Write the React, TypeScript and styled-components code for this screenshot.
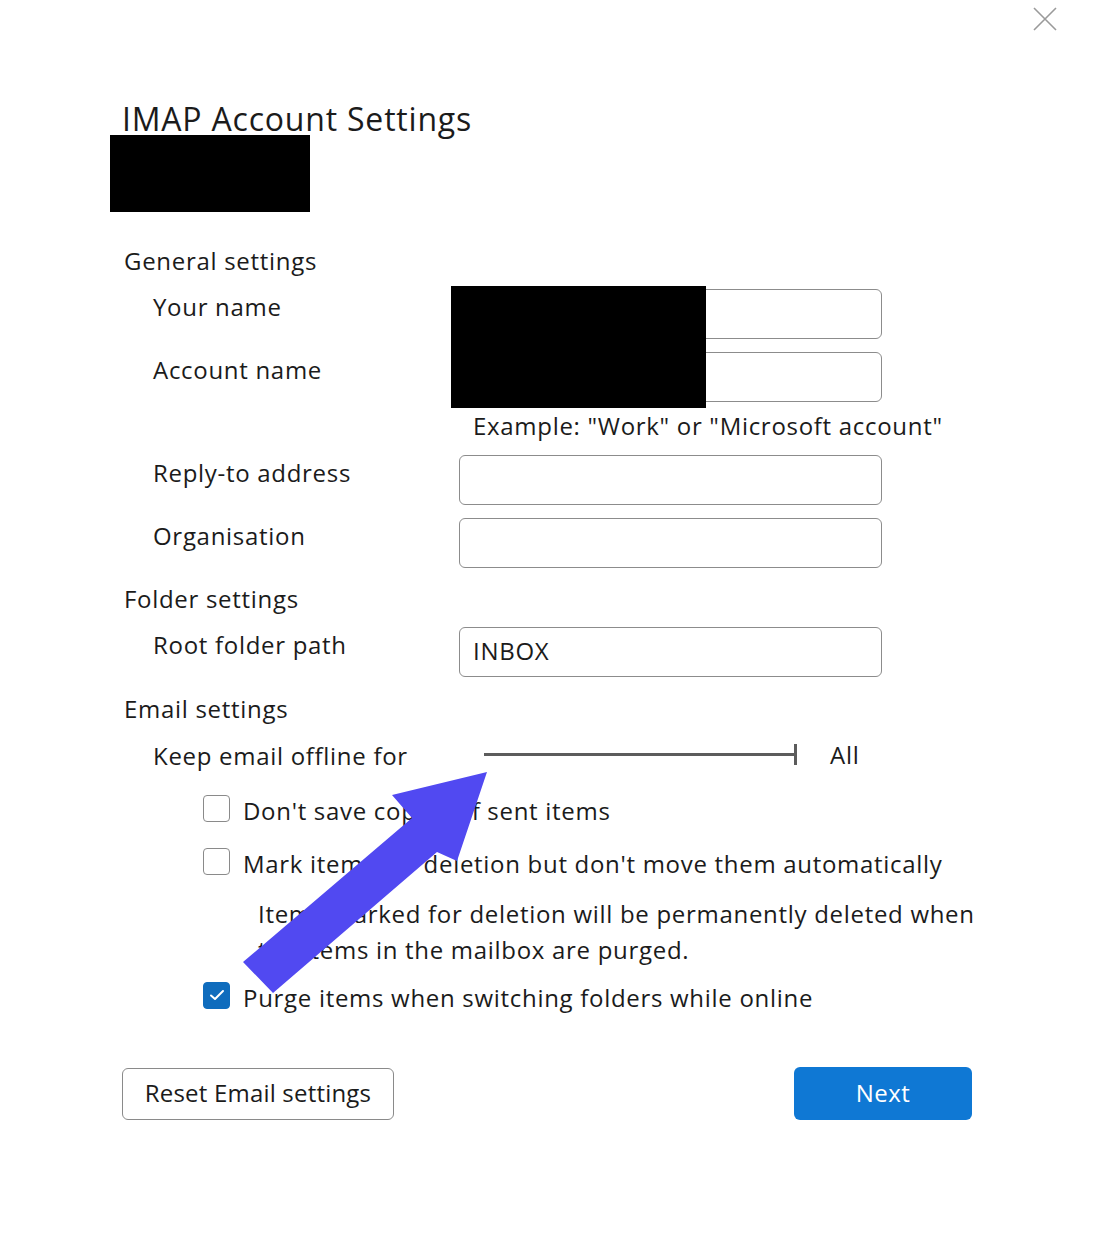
import styled, { createGlobalStyle } from "styled-components";

const GlobalStyle = createGlobalStyle`
  html, body {
    margin: 0;
    padding: 0;
    background: #ffffff;
  }
  body {
    font-family: "Open Sans", "Noto Sans", "Liberation Sans", sans-serif;
    color: #1b1b1b;
    letter-spacing: 0.7px;
  }
`;

const Page = styled.div`
  position: relative;
  width: 1101px;
  height: 1242px;
  background: #ffffff;
  overflow: hidden;
`;

const TopBar = styled.div`
  display: flex;
  justify-content: flex-end;
  height: 40px;
  padding-right: 44px;
`;

const CloseButton = styled.button`
  width: 24px;
  height: 24px;
  margin-top: 7px;
  padding: 0;
  border: none;
  background: transparent;
  display: flex;
  align-items: center;
  justify-content: center;
`;

const Content = styled.div`
  padding-left: 122px;
  width: 850px;
`;

const Title = styled.h1`
  margin: 59px 0 0;
  font-size: 32px;
  font-weight: 400;
  line-height: 40px;
  color: #1b1b1b;
  letter-spacing: 0.8px;
  white-space: nowrap;
`;

const Redacted = styled.div<{ $w: number; $h: number }>`
  width: ${(p) => p.$w}px;
  height: ${(p) => p.$h}px;
  background: #000000;
`;

const AccountRedaction = styled(Redacted)`
  margin: -4px 0 0 -12px;
`;

const SectionTitle = styled.div<{ $top: number }>`
  margin-top: ${(p) => p.$top}px;
  margin-left: 2px;
  font-size: 24px;
  line-height: 32px;
`;

const FieldGroup = styled.div`
  position: relative;
`;

const NameRedaction = styled(Redacted)`
  position: absolute;
  left: 329px;
  top: -3px;
`;

const FieldRow = styled.div<{ $top: number }>`
  display: grid;
  grid-template-columns: 306px 423px;
  align-items: center;
  height: 50px;
  margin-top: ${(p) => p.$top}px;
  padding-left: 31px;
`;

const Label = styled.div`
  font-size: 24px;
  line-height: 32px;
  padding-bottom: 14px;
  white-space: nowrap;
`;

const TextBox = styled.div`
  box-sizing: border-box;
  height: 50px;
  border: 1.5px solid #8c8c8c;
  border-radius: 6px;
  padding: 0 13px 3px;
  display: flex;
  align-items: center;
  font-size: 24px;
  color: #1b1b1b;
`;

const Hint = styled.div`
  margin: 8px 0 0 351px;
  font-size: 24px;
  line-height: 32px;
  white-space: nowrap;
`;

const SliderRow = styled.div`
  display: grid;
  grid-template-columns: 331px 313px auto;
  align-items: center;
  height: 32px;
  margin-top: 14px;
  padding-left: 31px;
`;

const SliderLabel = styled.div`
  font-size: 24px;
  line-height: 32px;
  white-space: nowrap;
`;

const Track = styled.div`
  position: relative;
  height: 3px;
  background: #5c5c5c;
  margin-top: -4px;

  &::after {
    content: "";
    position: absolute;
    right: 0;
    top: -9px;
    width: 3px;
    height: 21px;
    background: #5c5c5c;
  }
`;

const SliderValue = styled.div`
  padding-left: 33px;
  font-size: 24px;
  line-height: 32px;
  padding-bottom: 2px;
`;

const CheckRow = styled.label<{ $top: number }>`
  display: flex;
  align-items: center;
  gap: 13px;
  height: 32px;
  margin-top: ${(p) => p.$top}px;
  padding-left: 81px;
  font-size: 24px;
  white-space: nowrap;
`;

const CheckText = styled.span`
  padding-top: 5px;
`;

const Box = styled.span<{ $checked?: boolean }>`
  box-sizing: border-box;
  width: 27px;
  height: 27px;
  border-radius: 4px;
  border: 1.5px solid ${(p) => (p.$checked ? "#0f6cbd" : "#8a8a8a")};
  background: ${(p) => (p.$checked ? "#0f6cbd" : "#ffffff")};
  display: flex;
  align-items: center;
  justify-content: center;
  flex-shrink: 0;
`;

const Description = styled.div`
  margin: 19px 0 0 136px;
  font-size: 24px;
  line-height: 36px;
  white-space: nowrap;
`;

const Footer = styled.div`
  display: flex;
  justify-content: space-between;
  align-items: center;
  margin-top: 56px;
`;

const SecondaryButton = styled.button`
  box-sizing: border-box;
  width: 272px;
  height: 52px;
  border: 1.5px solid #8a8a8a;
  border-radius: 6px;
  background: #ffffff;
  font-family: inherit;
  font-size: 24px;
  color: #1b1b1b;
  letter-spacing: 0.2px;
  padding: 0 0 3px;
`;

const PrimaryButton = styled.button`
  box-sizing: border-box;
  width: 178px;
  height: 53px;
  border: none;
  border-radius: 6px;
  background: #0f78d4;
  font-family: inherit;
  font-size: 24px;
  color: #ffffff;
  letter-spacing: 0.4px;
  padding: 0 0 3px;
`;

const Annotation = styled.svg`
  position: absolute;
  left: 0;
  top: 0;
  pointer-events: none;
`;

const CheckMark = () => (
  <svg width="16" height="12" viewBox="0 0 16 12">
    <path d="M2 6.5 L6 10 L14 2" fill="none" stroke="#ffffff" strokeWidth="2" strokeLinecap="round" strokeLinejoin="round" />
  </svg>
);

const App = () => {
  return (
    <Page>
      <GlobalStyle />
      <TopBar>
        <CloseButton aria-label="Close">
          <svg width="24" height="24" viewBox="0 0 24 24">
            <path d="M1 1 L23 23 M23 1 L1 23" stroke="#9a9a9a" strokeWidth="1.6" />
          </svg>
        </CloseButton>
      </TopBar>
      <Content>
        <Title>IMAP Account Settings</Title>
        <AccountRedaction $w={200} $h={77} />

        <SectionTitle $top={33}>General settings</SectionTitle>
        <FieldGroup>
          <FieldRow $top={12}>
            <Label>Your name</Label>
            <TextBox />
          </FieldRow>
          <FieldRow $top={13}>
            <Label>Account name</Label>
            <TextBox />
          </FieldRow>
          <NameRedaction $w={255} $h={122} />
        </FieldGroup>
        <Hint>Example: "Work" or "Microsoft account"</Hint>
        <FieldRow $top={13}>
          <Label>Reply-to address</Label>
          <TextBox />
        </FieldRow>
        <FieldRow $top={13}>
          <Label>Organisation</Label>
          <TextBox />
        </FieldRow>

        <SectionTitle $top={15}>Folder settings</SectionTitle>
        <FieldRow $top={12}>
          <Label>Root folder path</Label>
          <TextBox>INBOX</TextBox>
        </FieldRow>

        <SectionTitle $top={16}>Email settings</SectionTitle>
        <SliderRow>
          <SliderLabel>Keep email offline for</SliderLabel>
          <Track />
          <SliderValue>All</SliderValue>
        </SliderRow>
        <CheckRow $top={21}>
          <Box />
          <CheckText>Don't save copies of sent items</CheckText>
        </CheckRow>
        <CheckRow $top={21}>
          <Box />
          <CheckText>Mark items for deletion but don't move them automatically</CheckText>
        </CheckRow>
        <Description>
          Items marked for deletion will be permanently deleted when
          <br />
          the items in the mailbox are purged.
        </Description>
        <CheckRow $top={11}>
          <Box $checked>
            <CheckMark />
          </Box>
          <CheckText>Purge items when switching folders while online</CheckText>
        </CheckRow>

        <Footer>
          <SecondaryButton>Reset Email settings</SecondaryButton>
          <PrimaryButton>Next</PrimaryButton>
        </Footer>
      </Content>

      <Annotation width="1101" height="1242" viewBox="0 0 1101 1242">
        <polygon
          points="487,772 392,795 412,818 243,962 273,993 437,852 457,861"
          fill="#5149f1"
        />
      </Annotation>
    </Page>
  );
};

export default App;
